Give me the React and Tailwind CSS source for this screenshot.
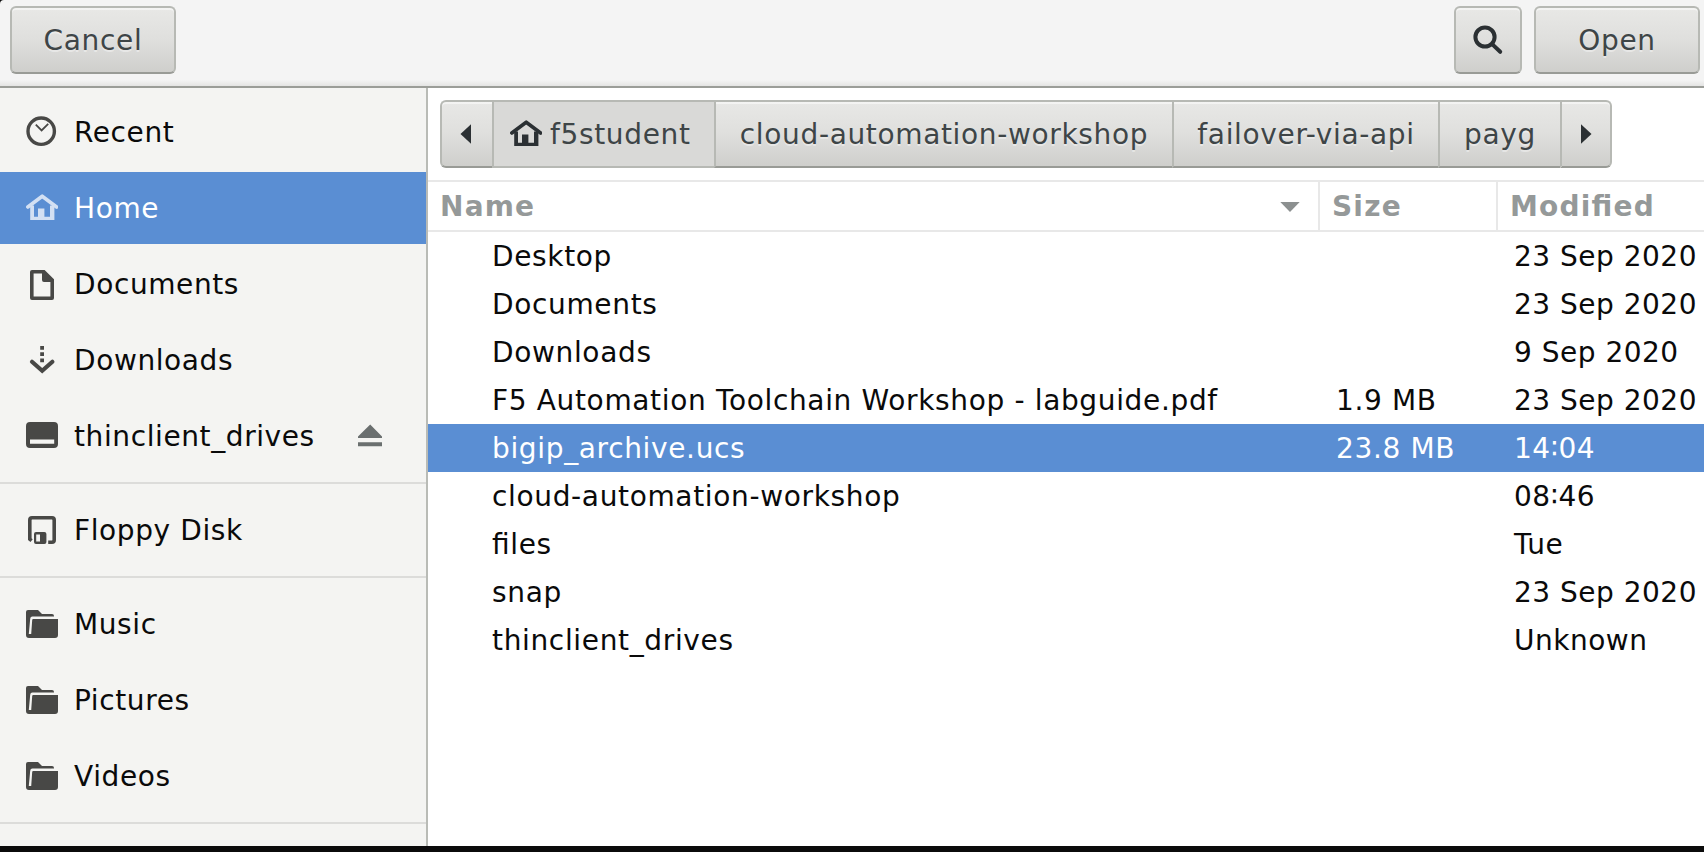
import React from "react";

function Icon({ children, className = "" }) {
  return (
    <svg viewBox="0 0 16 16" className={`size-8 shrink-0 ${className}`} fill="currentColor">
      {children}
    </svg>
  );
}

const RecentIcon = () => (
  <Icon>
    <circle cx="7.6" cy="7.6" r="6.6" fill="none" stroke="currentColor" strokeWidth="1.7" />
    <path d="M4.9 4.3 7.8 7.2 11.1 3.9" fill="none" stroke="currentColor" strokeWidth="0.9" />
  </Icon>
);

const HomeIcon = () => (
  <Icon>
    <path d="M0.9 7.5 8.1 2.1 15.3 7.5" fill="none" stroke="currentColor" strokeWidth="1.8" strokeLinecap="round" strokeLinejoin="round" />
    <path d="M2.1 6.8h1.9v5.6h2V8.2h3.2v4.2H12V6.8h2.2V14H2.1z" />
  </Icon>
);

const DocumentIcon = () => (
  <Icon>
    <path d="M2 2q0-1 1-1h6.3L14 5.6V15q0 1-1 1H3q-1 0-1-1zM3.8 2.8v11.4h8.4V7H9Q8 7 8 6V2.8z" fillRule="evenodd" />
  </Icon>
);

const DownloadIcon = () => (
  <Icon>
    <path d="M7.1 1h1.9v1.9H7.1zM7.1 4.1h1.9V6H7.1zM7.1 7.2h1.9v1.9H7.1z" />
    <path d="M3 8.9 8.1 13.4 13.2 8.9" fill="none" stroke="currentColor" strokeWidth="2.1" strokeLinecap="round" />
  </Icon>
);

const DriveIcon = () => (
  <Icon>
    <path d="M2 1h12q2 0 2 2v9q0 2-2 2H2q-2 0-2-2V3q0-2 2-2zM2 9.8v2.1h12.1V9.8z" fillRule="evenodd" />
  </Icon>
);

const FloppyIcon = () => (
  <Icon>
    <path d="M2.8 13.3 1.9 12.6V3q0-1.1 1.1-1.1h10q1.1 0 1.1 1.1v10q0 1.1-1.1 1.1h-1.9" fill="none" stroke="currentColor" strokeWidth="1.8" />
    <path d="M5 9h4.2q1 0 1 1v4q0 1-1 1H5q-1 0-1-1v-4q0-1 1-1zm.1 1.2v3.6H7v-3.6z" fillRule="evenodd" />
  </Icon>
);

const FolderIcon = () => (
  <Icon>
    <path d="M1 1h5l2 2h5q1 0 1 1v.3H3.2Q2.2 4.3 2.1 5.4L1.4 13h1.2L3.1 6q0-.5.5-.5H16v8q0 1.5-1.5 1.5h-13Q0 15 0 13.5V2q0-1 1-1z" />
  </Icon>
);

const SearchIcon = () => (
  <Icon>
    <circle cx="6.5" cy="6.5" r="4.8" fill="none" stroke="currentColor" strokeWidth="2" />
    <path d="M10.2 10.2 14.1 13.9" stroke="currentColor" strokeWidth="2" strokeLinecap="round" />
  </Icon>
);

const EjectIcon = () => (
  <svg viewBox="0 0 24 24" className="h-6 w-6 text-[#6a6f6f]" fill="currentColor">
    <path d="M12.2 0.5 24 12.5V14H0v-1.5zM0 18.3h24v4H0z" />
  </svg>
);

const groups = [
  [
    { label: "Recent", icon: RecentIcon },
    { label: "Home", icon: HomeIcon, active: true },
    { label: "Documents", icon: DocumentIcon },
    { label: "Downloads", icon: DownloadIcon },
    { label: "thinclient_drives", icon: DriveIcon, eject: true },
  ],
  [{ label: "Floppy Disk", icon: FloppyIcon }],
  [
    { label: "Music", icon: FolderIcon },
    { label: "Pictures", icon: FolderIcon },
    { label: "Videos", icon: FolderIcon },
  ],
];

const files = [
  { name: "Desktop", size: "", modified: "23 Sep 2020" },
  { name: "Documents", size: "", modified: "23 Sep 2020" },
  { name: "Downloads", size: "", modified: "9 Sep 2020" },
  { name: "F5 Automation Toolchain Workshop - labguide.pdf", size: "1.9 MB", modified: "23 Sep 2020" },
  { name: "bigip_archive.ucs", size: "23.8 MB", modified: "14∶04", selected: true },
  { name: "cloud-automation-workshop", size: "", modified: "08∶46" },
  { name: "files", size: "", modified: "Tue" },
  { name: "snap", size: "", modified: "23 Sep 2020" },
  { name: "thinclient_drives", size: "", modified: "Unknown" },
];

const raised =
  "flex h-[68px] items-center justify-center border-2 border-[#b7b9b4] border-b-[#999b96] bg-linear-to-b from-[#e8e8e6] via-[#dfdfdd] to-[#cfcfcc] text-[#3e4547] [text-shadow:0_2px_0_rgba(255,255,255,0.4)] shadow-[inset_0_2px_0_rgba(255,255,255,0.5)]";

function Sidebar() {
  return (
    <nav className="flex w-[428px] shrink-0 flex-col border-r-2 border-[#b9bbb6] bg-[#f4f4f2] pt-2">
      {groups.map((group, i) => (
        <div key={i} className="mb-[10px] flex flex-col gap-1 border-b-2 border-[#dcdcda] pb-[10px]">
          {group.map(({ label, icon: Glyph, active, eject }) => (
            <div
              key={label}
              className={`flex h-[72px] items-center gap-4 pr-11 pl-[26px] ${active ? "bg-[#5a8ed3] text-white" : "text-[#0a0a0a]"}`}
            >
              <span className={active ? "text-[#d3e0f3]" : "text-[#484846]"}>
                <Glyph />
              </span>
              <span className="flex-1 pt-[2px] tracking-[0.6px]">{label}</span>
              {eject && <EjectIcon />}
            </div>
          ))}
        </div>
      ))}
    </nav>
  );
}

function PathBar() {
  return (
    <div className="flex h-[92px] pt-3 pl-3">
      <button className={`${raised} w-[52px] rounded-l-md border-r-0 pr-[2px]`}>
        <svg viewBox="0 0 12 20" className="h-5 w-3 fill-[#2b3033]">
          <path d="M0.5 10 11 0.3v19.4z" />
        </svg>
      </button>
      <button className="flex h-[68px] w-[222px] items-center gap-2 border-2 border-r-0 border-[#b7b9b4] bg-[#d9d9d7] pl-4 text-[#3e4547]">
        <span className="text-[#2b3033]">
          <HomeIcon />
        </span>
        <span className="pt-[2px]">f5student</span>
      </button>
      <button className={`${raised} w-[458px] border-r-0 pt-[2px]`}>cloud-automation-workshop</button>
      <button className={`${raised} w-[266px] border-r-0 pt-[2px]`}>failover-via-api</button>
      <button className={`${raised} w-[122px] border-r-0 pt-[2px]`}>payg</button>
      <button className={`${raised} w-[52px] rounded-r-md`}>
        <svg viewBox="0 0 12 20" className="h-5 w-3 fill-[#2b3033]">
          <path d="M11.5 10 1 0.3v19.4z" />
        </svg>
      </button>
    </div>
  );
}

function FileTable() {
  return (
    <div>
      <div className="flex h-[52px] border-y-2 border-[#e8e8e8] font-bold tracking-[1.2px] text-[#959999]">
        <div className="flex w-[892px] items-center justify-between border-r-2 border-[#e8e8e8] pr-[18px] pl-3">
          <span className="pt-[2px]">Name</span>
          <svg viewBox="0 0 20 10" className="mt-[2px] h-[10px] w-5 fill-[#8c9090]">
            <path d="M0.3 0h19.4L10 10z" />
          </svg>
        </div>
        <div className="flex w-[178px] items-center border-r-2 border-[#e8e8e8] pt-[2px] pl-3">Size</div>
        <div className="flex items-center pt-[2px] pl-3">Modified</div>
      </div>
      {files.map((f) => (
        <div
          key={f.name}
          className={`flex h-12 items-center whitespace-nowrap pt-[2px] ${f.selected ? "bg-[#5a8ed3] text-white" : "text-[#0a0a0a]"}`}
        >
          <div className="w-[908px] pl-16">{f.name}</div>
          <div className="w-[178px]">{f.size}</div>
          <div className="tracking-[0.5px]">{f.modified}</div>
        </div>
      ))}
    </div>
  );
}

export default function App() {
  return (
    <div className="flex h-[852px] w-[1704px] flex-col overflow-hidden bg-[#0b0b0b] font-['DejaVu_Sans',sans-serif] text-[28px] leading-[32px] tracking-[0.65px] [font-feature-settings:'liga'_1]">
      <header className="flex h-[88px] shrink-0 items-start gap-3 rounded-tl-[4px] border-b-2 border-[#9b9d98] bg-[linear-gradient(to_bottom,#f4f4f4_80px,#e4e4e3_86px)] pt-[6px] pr-1 pl-[10px]">
        <button className={`${raised} w-[166px] rounded-md pt-[2px]`}>Cancel</button>
        <div className="flex-1" />
        <button className={`${raised} w-[68px] rounded-md`}>
          <span className="text-[#2b3033]">
            <SearchIcon />
          </span>
        </button>
        <button className={`${raised} w-[166px] rounded-md pt-[2px]`}>Open</button>
      </header>
      <div className="flex h-[758px] shrink-0 overflow-hidden bg-white">
        <Sidebar />
        <main className="min-w-0 flex-1 overflow-hidden">
          <PathBar />
          <FileTable />
        </main>
      </div>
    </div>
  );
}
